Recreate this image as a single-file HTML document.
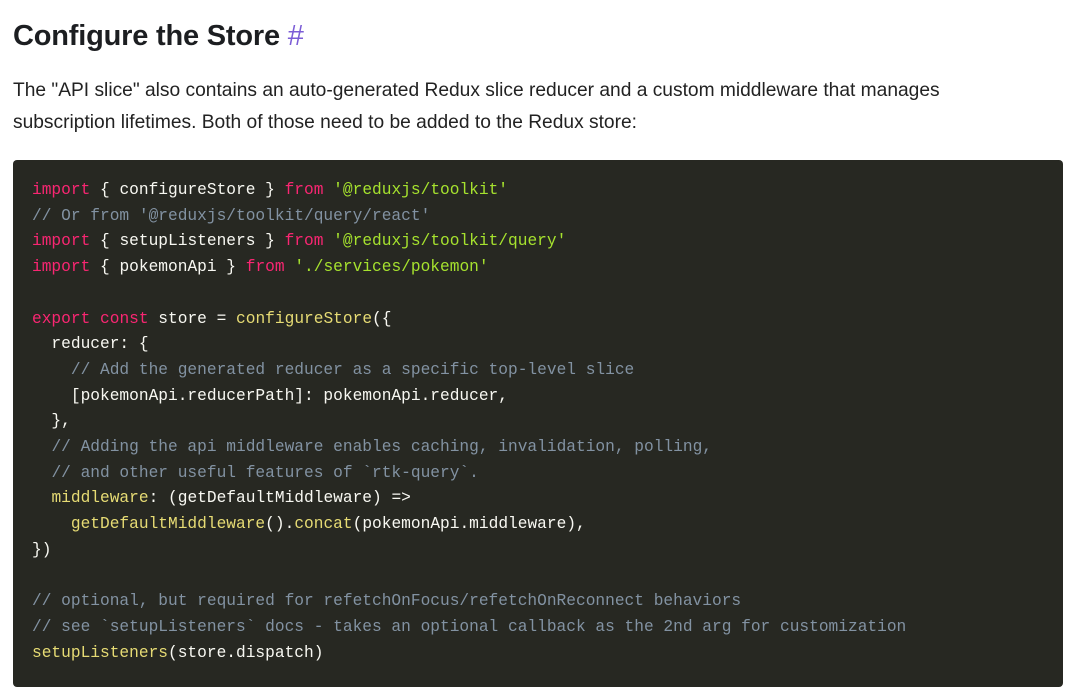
<!DOCTYPE html>
<html><head><meta charset="utf-8"><style>
body{margin:0;background:#fff;width:1080px;height:693px;overflow:hidden;font-family:"Liberation Sans",sans-serif;color:#1c1e21}
h2{position:absolute;left:13px;top:14px;margin:0;font-size:29px;font-weight:bold;line-height:44px;letter-spacing:-0.2px}
h2 span{color:#7b5cd6;font-weight:normal}
p{position:absolute;left:13px;top:75px;margin:0;font-size:19.2px;line-height:32px;width:1000px;color:#222}
pre{position:absolute;left:13px;top:160px;width:1050px;height:527px;margin:0;box-sizing:border-box;background:#272822;border-radius:4px;padding:178px 0 0 19px;padding-top:18px;font-family:"Liberation Mono",monospace;font-size:16.2px;line-height:25.7px;color:#f8f8f2}
.k{color:#f92672}.s{color:#a6e22e}.c{color:#8292a2}.f{color:#e6db74}
</style></head><body>
<h2>Configure the Store <span>#</span></h2>
<p>The "API slice" also contains an auto-generated Redux slice reducer and a custom middleware that manages subscription lifetimes. Both of those need to be added to the Redux store:</p>
<pre><span class="k">import</span> { configureStore } <span class="k">from</span> <span class="s">'@reduxjs/toolkit'</span>
<span class="c">// Or from '@reduxjs/toolkit/query/react'</span>
<span class="k">import</span> { setupListeners } <span class="k">from</span> <span class="s">'@reduxjs/toolkit/query'</span>
<span class="k">import</span> { pokemonApi } <span class="k">from</span> <span class="s">'./services/pokemon'</span>

<span class="k">export</span> <span class="k">const</span> store = <span class="f">configureStore</span>({
  reducer: {
    <span class="c">// Add the generated reducer as a specific top-level slice</span>
    [pokemonApi.reducerPath]: pokemonApi.reducer,
  },
  <span class="c">// Adding the api middleware enables caching, invalidation, polling,</span>
  <span class="c">// and other useful features of `rtk-query`.</span>
  <span class="f">middleware</span>: (getDefaultMiddleware) =&gt;
    <span class="f">getDefaultMiddleware</span>().<span class="f">concat</span>(pokemonApi.middleware),
})

<span class="c">// optional, but required for refetchOnFocus/refetchOnReconnect behaviors</span>
<span class="c">// see `setupListeners` docs - takes an optional callback as the 2nd arg for customization</span>
<span class="f">setupListeners</span>(store.dispatch)</pre>
</body></html>
